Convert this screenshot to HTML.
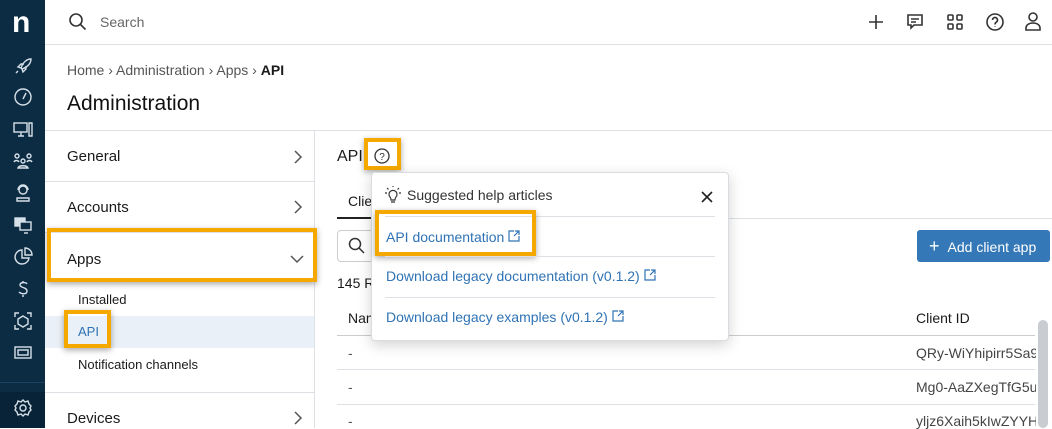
<!DOCTYPE html>
<html><head><style>
*{box-sizing:border-box;margin:0;padding:0}
body{width:1052px;height:428px;overflow:hidden;background:#fff;font-family:"Liberation Sans",sans-serif;color:#1a1a1a;position:relative}
.a{position:absolute}
.side{left:0;top:0;width:45px;height:428px;background:#0c2c44}
.ic{position:absolute;left:12px;width:22px;height:22px}
.ic svg{width:22px;height:22px;stroke:#d6e0e8;fill:none;stroke-width:1.4}
.top svg{width:20px;height:20px;stroke:#333;fill:none;stroke-width:1.6}
.hl{height:1px;background:#dde1e5}
.ob{border:4px solid #f5a800;box-shadow:0 2px 6px rgba(0,0,0,.35)}
.lk{color:#2f73b5;font-size:14px}
.chev{stroke:#555;fill:none;stroke-width:1.5}
</style></head><body>
<div class="a side">
 <div class="a" style="left:12px;top:8px;font:bold 30px 'Liberation Sans';color:#fff;line-height:30px">n</div>
 <div class="ic" style="top:55px"><svg viewBox="0 0 22 22"><path d="M6 16l-2 2M9 13c2-6 6-9 10-9 0 4-3 8-9 10zM9 13l-3-1 3-3h3M10 14l1 3 3-3v-3"/></svg></div>
 <div class="ic" style="top:86px"><svg viewBox="0 0 22 22"><circle cx="11" cy="11" r="8"/><path d="M11 13l3-6"/></svg></div>
 <div class="ic" style="top:118px"><svg viewBox="0 0 22 22"><rect x="2" y="5" width="13" height="9"/><path d="M6 18h6M9 14v4M17 5h3v13h-3z"/></svg></div>
 <div class="ic" style="top:150px"><svg viewBox="0 0 22 22"><circle cx="5" cy="6" r="2"/><circle cx="17" cy="6" r="2"/><circle cx="11" cy="11" r="2"/><path d="M2 12c1-2 4-2 5 0M15 12c1-2 4-2 5 0M6 18c1-3 9-3 10 0z"/></svg></div>
 <div class="ic" style="top:182px"><svg viewBox="0 0 22 22"><circle cx="11" cy="8" r="4"/><path d="M6 8a5 5 0 0110 0M5 19h12v-3H5z"/></svg></div>
 <div class="ic" style="top:214px"><svg viewBox="0 0 22 22" style="fill:#d6e0e8"><rect x="3" y="4" width="10" height="8"/><rect x="8" y="8" width="11" height="8" style="fill:#0c2c44"/><path d="M12 19h4"/></svg></div>
 <div class="ic" style="top:246px"><svg viewBox="0 0 22 22"><path d="M10 4a7 7 0 107 8h-7z"/><path d="M13 2a7 7 0 017 7h-7z"/></svg></div>
 <div class="ic" style="top:278px"><svg viewBox="0 0 22 22"><path d="M15 6c-1-2-7-2-7 1s7 2 7 6-6 3-8 1M11 3v2M11 17v2"/></svg></div>
 <div class="ic" style="top:310px"><svg viewBox="0 0 22 22"><path d="M3 7V3h4M15 3h4v4M19 15v4h-4M7 19H3v-4M11 6l5 3v5l-5 3-5-3V9z"/></svg></div>
 <div class="ic" style="top:342px"><svg viewBox="0 0 22 22"><rect x="3" y="5" width="16" height="11"/><rect x="6" y="8" width="10" height="5"/></svg></div>
 <div class="a" style="left:0;top:382px;width:45px;height:1px;background:#1d4460"></div>
 <div class="a" style="left:0;top:392px;width:45px;height:36px;background:#082338"></div>
 <div class="ic" style="top:397px"><svg viewBox="0 0 22 22"><circle cx="11" cy="11" r="3"/><path d="M11 3l2 2 3-1 1 3 2 2-1 2 1 2-2 2-1 3-3-1-2 2-2-2-3 1-1-3-2-2 1-2-1-2 2-2 1-3 3 1z"/></svg></div>
</div>
<!-- top bar -->
<div class="a top" style="left:68px;top:12px"><svg viewBox="0 0 20 20"><circle cx="8" cy="8" r="6"/><path d="M12.5 12.5l5 5"/></svg></div>
<div class="a" style="left:100px;top:14px;font-size:14px;color:#666">Search</div>
<div class="a top" style="left:866px;top:12px"><svg viewBox="0 0 20 20"><path d="M10 3v14M3 10h14"/></svg></div>
<div class="a top" style="left:905px;top:12px"><svg viewBox="0 0 20 20"><path d="M3 3h14v10H9l-3 3v-3H3zM6 7h8M6 10h5"/></svg></div>
<div class="a top" style="left:945px;top:12px"><svg viewBox="0 0 20 20"><rect x="3" y="3" width="5" height="5" rx="1"/><rect x="12" y="3" width="5" height="5" rx="1"/><rect x="3" y="12" width="5" height="5" rx="1"/><rect x="12" y="12" width="5" height="5" rx="1"/></svg></div>
<div class="a top" style="left:985px;top:12px"><svg viewBox="0 0 20 20"><circle cx="10" cy="10" r="8"/><path d="M7.5 8a2.5 2.5 0 114 2c-1 .7-1.5 1-1.5 2.5M10 14.5v.5"/></svg></div>
<div class="a top" style="left:1023px;top:11px"><svg viewBox="0 0 20 20"><circle cx="10" cy="6" r="4"/><path d="M3 19v-2c0-3 3-5 7-5s7 2 7 5v2z"/></svg></div>
<div class="a hl" style="left:45px;top:44px;width:1007px"></div>
<div class="a" style="left:67px;top:62px;font-size:14px;color:#555">Home › Administration › Apps › <b style="color:#1a1a1a">API</b></div>
<div class="a" style="left:67px;top:92px;font-size:21px;color:#111">Administration</div>
<div class="a hl" style="left:45px;top:130px;width:1007px"></div>
<!-- left panel -->
<div class="a" style="left:314px;top:130px;width:1px;height:298px;background:#dde1e5"></div>
<div class="a" style="left:67px;top:148px;font-size:15px">General</div>
<svg class="a chev" style="left:292px;top:149px" width="12" height="16"><path d="M3 2l6 6-6 6"/></svg>
<div class="a hl" style="left:45px;top:181px;width:269px"></div>
<div class="a" style="left:67px;top:199px;font-size:15px">Accounts</div>
<svg class="a chev" style="left:292px;top:199px" width="12" height="16"><path d="M3 2l6 6-6 6"/></svg>
<div class="a hl" style="left:45px;top:232px;width:269px"></div>
<div class="a ob" style="left:47px;top:228px;width:270px;height:54px"></div>
<div class="a" style="left:67px;top:251px;font-size:15px">Apps</div>
<svg class="a chev" style="left:289px;top:253px" width="16" height="12"><path d="M2 3l6 6 6-6"/></svg>
<div class="a" style="left:78px;top:292px;font-size:13px">Installed</div>
<div class="a" style="left:45px;top:316px;width:269px;height:32px;background:#e9f0f7"></div>
<div class="a ob" style="left:64px;top:310px;width:47px;height:38px"></div>
<div class="a" style="left:78px;top:324px;font-size:13px;color:#2f73b5">API</div>
<div class="a" style="left:78px;top:357px;font-size:13px">Notification channels</div>
<div class="a hl" style="left:45px;top:392px;width:269px"></div>
<div class="a" style="left:67px;top:410px;font-size:15px">Devices</div>
<svg class="a chev" style="left:292px;top:410px" width="12" height="16"><path d="M3 2l6 6-6 6"/></svg>
<!-- right -->
<div class="a" style="left:337px;top:148px;font-size:16px">API</div>
<div class="a ob" style="left:364px;top:138px;width:37px;height:32px"></div>
<svg class="a" style="left:374px;top:148px" width="16" height="16"><circle cx="8" cy="8" r="7" fill="none" stroke="#333" stroke-width="1.3"/><text x="8" y="12" font-size="10" text-anchor="middle" fill="#333" font-family="Liberation Sans">?</text></svg>
<div class="a" style="left:348px;top:193px;font-size:14px">Clie</div>
<div class="a" style="left:337px;top:217px;width:40px;height:2px;background:#222"></div>
<div class="a hl" style="left:377px;top:218px;width:675px"></div>
<div class="a" style="left:337px;top:230px;width:60px;height:32px;border:1px solid #ccc;border-radius:4px"></div>
<svg class="a" style="left:348px;top:237px" width="18" height="18"><circle cx="7" cy="7" r="5.5" fill="none" stroke="#333" stroke-width="1.5"/><path d="M11 11l5 5" stroke="#333" stroke-width="1.5"/></svg>
<div class="a" style="left:337px;top:275px;font-size:14px">145 R</div>
<div class="a" style="left:917px;top:230px;width:133px;height:32px;background:#3478b8;border-radius:3px;color:#fff;font-size:14px;line-height:32px;padding-left:12px"><span style="font-size:18px;margin-right:8px">+</span>Add client app</div>
<div class="a" style="left:348px;top:310px;font-size:14px">Nam</div>
<div class="a" style="left:916px;top:310px;font-size:14px">Client ID</div>
<div class="a hl" style="left:337px;top:335px;width:698px;background:#ccc"></div>
<div class="a" style="left:348px;top:345px;font-size:14px;color:#555">-</div>
<div class="a" style="left:916px;top:345px;font-size:14px;color:#444;width:120px;overflow:hidden;white-space:nowrap">QRy-WiYhipirr5Sa9S</div>
<div class="a hl" style="left:337px;top:369px;width:698px"></div>
<div class="a" style="left:348px;top:379px;font-size:14px;color:#555">-</div>
<div class="a" style="left:916px;top:379px;font-size:14px;color:#444;width:120px;overflow:hidden;white-space:nowrap">Mg0-AaZXegTfG5u-</div>
<div class="a hl" style="left:337px;top:404px;width:698px"></div>
<div class="a" style="left:348px;top:413px;font-size:14px;color:#555">-</div>
<div class="a" style="left:916px;top:413px;font-size:14px;color:#444;width:120px;overflow:hidden;white-space:nowrap">yljz6Xaih5kIwZYYH9</div>
<div class="a" style="left:1038px;top:320px;width:10px;height:108px;background:#c9ccd1;border-radius:5px"></div>
<!-- popup -->
<div class="a" style="left:371px;top:172px;width:358px;height:169px;background:#fff;border:1px solid #d8dbdf;border-radius:4px;box-shadow:0 4px 14px rgba(0,0,0,.18)"></div>
<svg class="a" style="left:384px;top:186px" width="18" height="18" fill="none" stroke="#333" stroke-width="1.2"><path d="M6 11a4 4 0 116 0c-1 1-1 2-1 3H7c0-1 0-2-1-3zM7 16h4M1 7h2M15 7h2M3 2l1.5 1.5M15 2l-1.5 1.5M9 0v1"/></svg>
<div class="a" style="left:407px;top:187px;font-size:14px;color:#333">Suggested help articles</div>
<svg class="a" style="left:701px;top:191px" width="12" height="12" stroke="#222" stroke-width="1.6"><path d="M1 1l10 10M11 1L1 11"/></svg>
<div class="a hl" style="left:385px;top:216px;width:330px"></div>
<div class="a ob" style="left:375px;top:210px;width:161px;height:46px"></div>
<div class="a lk" style="left:386px;top:229px">API documentation <svg width="12" height="12" fill="none" stroke="#2f73b5" stroke-width="1.2"><path d="M6 1H1v10h10V6M7 1h4v4M11 1L6 6"/></svg></div>
<div class="a hl" style="left:385px;top:256px;width:330px"></div>
<div class="a lk" style="left:386px;top:268px">Download legacy documentation (v0.1.2) <svg width="12" height="12" fill="none" stroke="#2f73b5" stroke-width="1.2"><path d="M6 1H1v10h10V6M7 1h4v4M11 1L6 6"/></svg></div>
<div class="a hl" style="left:385px;top:297px;width:330px"></div>
<div class="a lk" style="left:386px;top:309px">Download legacy examples (v0.1.2) <svg width="12" height="12" fill="none" stroke="#2f73b5" stroke-width="1.2"><path d="M6 1H1v10h10V6M7 1h4v4M11 1L6 6"/></svg></div>
</body></html>
